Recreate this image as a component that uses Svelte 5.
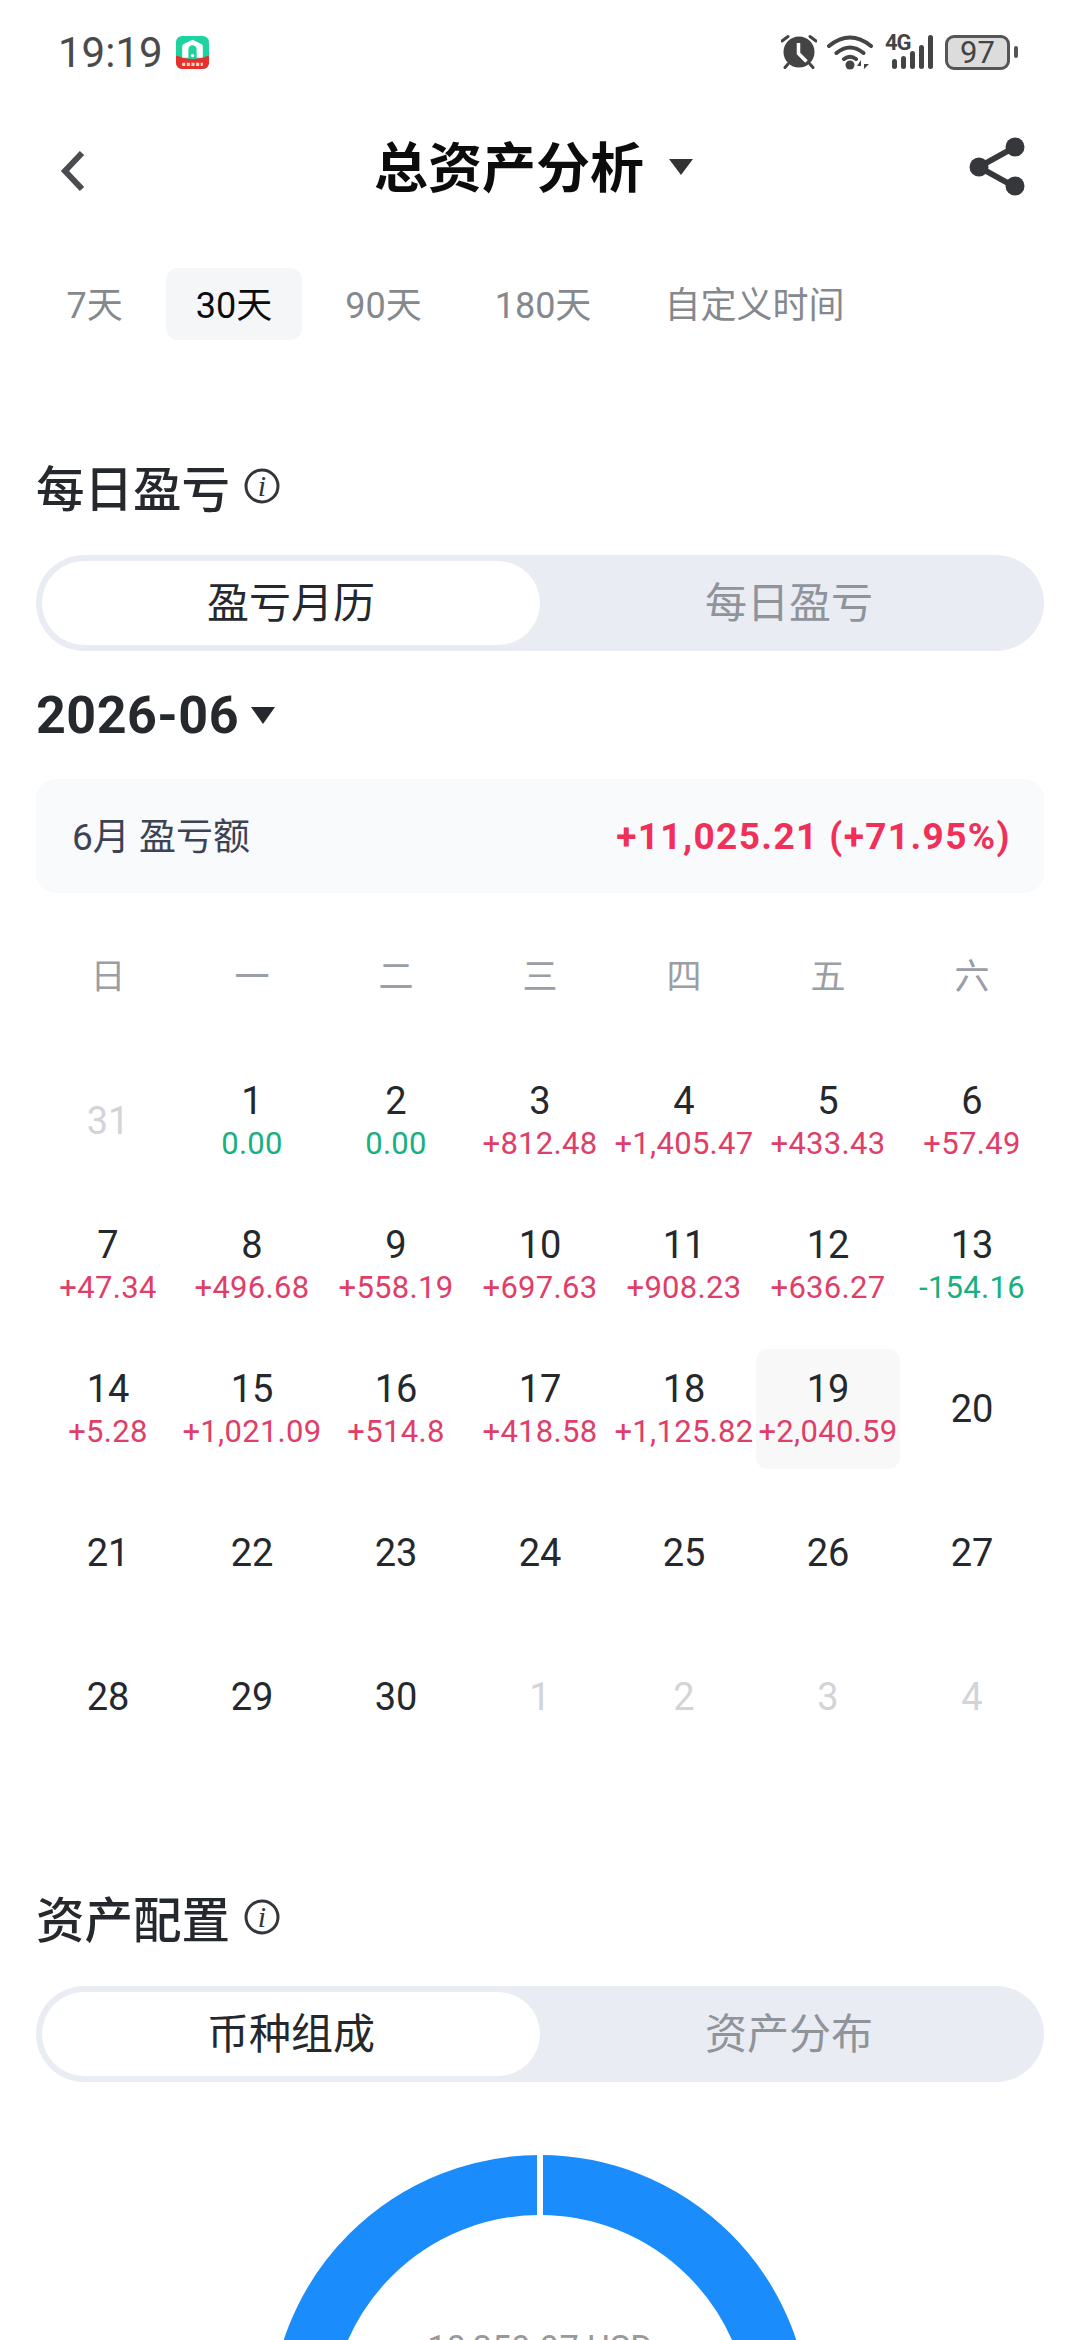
<script>
  const tabs = ['7天', '30天', '90天', '180天', '自定义时间'];
  const weekdays = ['日', '一', '二', '三', '四', '五', '六'];

  // muted = outside of this month, v = pnl of the day
  const days = [
    { d: 31, muted: true },
    { d: 1, v: '0.00', up: false },
    { d: 2, v: '0.00', up: false },
    { d: 3, v: '+812.48', up: true },
    { d: 4, v: '+1,405.47', up: true },
    { d: 5, v: '+433.43', up: true },
    { d: 6, v: '+57.49', up: true },
    { d: 7, v: '+47.34', up: true },
    { d: 8, v: '+496.68', up: true },
    { d: 9, v: '+558.19', up: true },
    { d: 10, v: '+697.63', up: true },
    { d: 11, v: '+908.23', up: true },
    { d: 12, v: '+636.27', up: true },
    { d: 13, v: '-154.16', up: false },
    { d: 14, v: '+5.28', up: true },
    { d: 15, v: '+1,021.09', up: true },
    { d: 16, v: '+514.8', up: true },
    { d: 17, v: '+418.58', up: true },
    { d: 18, v: '+1,125.82', up: true },
    { d: 19, v: '+2,040.59', up: true, today: true },
    { d: 20 }, { d: 21 }, { d: 22 }, { d: 23 }, { d: 24 }, { d: 25 }, { d: 26 }, { d: 27 }, { d: 28 }, { d: 29 }, { d: 30 },
    { d: 1, muted: true }, { d: 2, muted: true }, { d: 3, muted: true }, { d: 4, muted: true }
  ];
</script>

<div class="page">
  <div class="status">
    <span class="time">19:19</span>
    <svg class="appicon" width="33" height="33" viewBox="0 0 32 32">
      <rect width="32" height="32" rx="6" fill="#1fd3a0"/>
      <path d="M0 19q16 7 32 0v7a6 6 0 0 1-6 6H6a6 6 0 0 1-6-6z" fill="#e5302c"/>
      <path d="M6 21V10q0-1 1-2l8-4q1-.5 2 0l8 4q1 1 1 2v11h-6V13a4 4 0 0 0-8 0v8z" fill="#fff"/>
      <circle cx="16" cy="19" r="1.6" fill="#fff"/>
      <path d="M6 27.500h20" stroke="#ffd9c8" stroke-width="3" stroke-dasharray="3 1.500"/>
    </svg>
    <div class="status-right">
      <svg width="36" height="36" viewBox="0 0 36 36">
        <circle cx="18" cy="18" r="15.500" fill="#444"/>
        <path d="M17.500 9v10.500l8 8" stroke="#fff" stroke-width="3.500" fill="none"/>
        <path d="M1 7L7 2.500M29 2.500L35 7M7 30l-3 3.500M29 30l3 3.500" stroke="#444" stroke-width="3" stroke-linecap="round"/>
      </svg>
      <svg width="46" height="36" viewBox="0 0 46 36">
        <path d="M2 12Q23-5 44 12M9.500 19Q23 8 36.500 19M17 25Q23 20.500 29 25" stroke="#444" stroke-width="4" fill="none" stroke-linecap="round"/>
        <circle cx="23" cy="31" r="4.500" fill="#444"/>
        <path d="M34 35V26l-4 6h4zM37 26v9l5-5h-5z" fill="#444"/>
      </svg>
      <div class="net">
        <span class="g4">4G</span>
        <svg width="50" height="36" viewBox="0 0 50 36">
          <rect x="7" y="25" width="5" height="10" rx="2.500" fill="#444"/>
          <rect x="16" y="22" width="5" height="13" rx="2.500" fill="#444"/>
          <rect x="25" y="17" width="5" height="18" rx="2.500" fill="#444"/>
          <rect x="34" y="11" width="5" height="24" rx="2.500" fill="#444"/>
          <rect x="43" y="1" width="5" height="34" rx="2.500" fill="#444"/>
        </svg>
      </div>
      <div class="battery"><span>97</span></div>
      <div class="nub"></div>
    </div>
  </div>

  <header class="nav">
    <svg class="back" width="26" height="42" viewBox="0 0 26 42">
      <path d="M22 3L5 21l17 18" stroke="#4a4c52" stroke-width="6" fill="none"/>
    </svg>
    <div class="title"><span>总资产分析</span><i class="caret dark"></i></div>
    <svg class="share" width="56" height="60" viewBox="0 0 56 60">
      <path d="M46 10L10 30l36 20" stroke="#36373b" stroke-width="6" fill="none"/>
      <circle cx="46" cy="10" r="9.500" fill="#36373b"/>
      <circle cx="10" cy="30" r="9.500" fill="#36373b"/>
      <circle cx="46" cy="49" r="9.500" fill="#36373b"/>
    </svg>
  </header>

  <div class="tabs">
    {#each tabs as t, i}
      <span class="tab" class:active={i === 1}>{t}</span>
    {/each}
  </div>

  <section class="pnl">
    <h2>每日盈亏
      <svg class="info" width="36" height="36" viewBox="0 0 36 36">
        <circle cx="18" cy="18" r="16" stroke="#33353a" stroke-width="3" fill="none"/>
        <text x="18" y="28" text-anchor="middle" font-family="Liberation Serif" font-style="italic" font-size="30" fill="#33353a">i</text>
      </svg>
    </h2>
    <div class="segment">
      <span class="seg on">盈亏月历</span>
      <span class="seg">每日盈亏</span>
    </div>

    <div class="month"><span>2026-06</span><i class="caret"></i></div>

    <div class="summary">
      <span class="sum-label">6月 盈亏额</span>
      <span class="sum-value">+11,025.21 (+71.95%)</span>
    </div>

    <div class="weekdays">
      {#each weekdays as w}
        <span>{w}</span>
      {/each}
    </div>

    <div class="calendar">
      {#each days as c}
        <div class="cell" class:today={c.today}>
          <span class="num" class:muted={c.muted}>{c.d}</span>
          {#if c.v}
            <span class="val" class:up={c.up}>{c.v}</span>
          {/if}
        </div>
      {/each}
    </div>
  </section>

  <section class="alloc">
    <h2>资产配置
      <svg class="info" width="36" height="36" viewBox="0 0 36 36">
        <circle cx="18" cy="18" r="16" stroke="#33353a" stroke-width="3" fill="none"/>
        <text x="18" y="28" text-anchor="middle" font-family="Liberation Serif" font-style="italic" font-size="30" fill="#33353a">i</text>
      </svg>
    </h2>
    <div class="segment">
      <span class="seg on">币种组成</span>
      <span class="seg">资产分布</span>
    </div>
    <div class="donut">
      <svg width="540" height="540" viewBox="0 0 540 540">
        <circle cx="270" cy="270" r="240" stroke="#1b8cfb" stroke-width="60" fill="none"/>
        <rect x="267" y="0" width="6" height="62" fill="#fff"/>
      </svg>
      <span class="donut-total">10,359.97 USD</span>
    </div>
  </section>
</div>

<style>
  :global(body) {
    margin: 0;
    background: #fff;
  }

  .page {
    width: 1080px;
    height: 2340px;
    overflow: hidden;
    font-family: Roboto, "Noto Sans CJK SC", sans-serif;
    color: #25282d;
  }

  .status {
    height: 102px;
    padding: 2px 62px 0 58px;
    display: flex;
    align-items: center;
    box-sizing: border-box;
  }

  .time {
    font-size: 42px;
    color: #4a4a4a;
  }

  .appicon {
    margin-left: 13px;
  }

  .status-right {
    margin-left: auto;
    display: flex;
    align-items: center;
    gap: 10px;
  }

  .net {
    position: relative;
    margin-left: 2px;
  }

  .net svg {
    display: block;
  }

  .g4 {
    position: absolute;
    left: 0;
    top: -2px;
    font-size: 22px;
    line-height: 22px;
    font-weight: 700;
    letter-spacing: -1px;
    color: #444;
  }

  .battery {
    width: 65px;
    height: 35px;
    border: 3px solid #555;
    border-radius: 9px;
    background: #dcdcdc;
    box-sizing: border-box;
    display: flex;
    align-items: center;
    justify-content: center;
    font-size: 31px;
    color: #444;
  }

  .nub {
    width: 4px;
    height: 12px;
    background: #555;
    border-radius: 2px;
    margin-left: -6px;
  }

  .nav {
    height: 130px;
    padding: 0 55px 0 60px;
    display: flex;
    align-items: center;
    justify-content: space-between;
    box-sizing: border-box;
  }

  .back {
    margin-top: 8px;
  }

  .title {
    font-size: 54px;
    font-weight: 700;
    color: #0c0c0c;
    display: flex;
    align-items: center;
    gap: 25px;
    margin-left: 12px;
    padding-bottom: 6px;
  }

  .caret {
    display: inline-block;
    width: 0;
    height: 0;
    border-left: 12px solid transparent;
    border-right: 12px solid transparent;
    border-top: 17px solid #25282d;
  }

  .caret.dark {
    border-left-width: 12px;
    border-right-width: 12px;
    border-top: 16px solid #333;
    margin-top: 6px;
  }

  .tabs {
    margin-top: 36px;
    padding-left: 37px;
    display: flex;
    align-items: center;
    font-size: 36px;
    color: #85888d;
  }

  .tab {
    padding: 0 29.500px;
    height: 72px;
    line-height: 76px;
    border-radius: 12px;
    margin-right: 14px;
  }

  .tab.active {
    background: #f5f6f8;
    color: #0c0c0c;
  }

  section {
    padding: 0 36px;
  }

  .pnl {
    margin-top: 116px;
  }

  .alloc {
    margin-top: 118px;
  }

  h2 {
    margin: 0;
    height: 60px;
    display: flex;
    align-items: center;
    gap: 14px;
    font-size: 48.500px;
    font-weight: 500;
    color: #25282d;
  }

  .info {
    flex: none;
  }

  .segment {
    margin-top: 39px;
    height: 96px;
    background: #e9ecf2;
    border-radius: 48px;
    padding: 6px;
    display: grid;
    grid-template-columns: 1fr 1fr;
    box-sizing: border-box;
    font-size: 42px;
    color: #8f939a;
  }

  .seg {
    display: flex;
    align-items: center;
    justify-content: center;
    border-radius: 42px;
    padding-bottom: 8px;
    box-sizing: border-box;
  }

  .seg.on {
    background: #fff;
    color: #25282d;
  }

  .month {
    margin-top: 34px;
    display: flex;
    align-items: center;
    gap: 12px;
    height: 60px;
    font-size: 52px;
    font-weight: 700;
    letter-spacing: 0.500px;
    color: #25282d;
  }

  .summary {
    margin-top: 34px;
    height: 114px;
    background: #f8fafb;
    border-radius: 20px;
    padding: 0 33px 0 36px;
    display: flex;
    align-items: center;
    justify-content: space-between;
    font-size: 37px;
  }

  .sum-label {
    color: #3c4354;
    margin-top: -4px;
  }

  .sum-value {
    color: #f03058;
    font-size: 37px;
    font-weight: 700;
    letter-spacing: 1.400px;
  }

  .weekdays {
    margin-top: 45px;
    display: grid;
    grid-template-columns: repeat(7, 1fr);
    height: 70px;
    align-items: center;
    text-align: center;
    font-size: 35px;
    color: #9a9ea5;
  }

  .calendar {
    margin-top: 41px;
    display: grid;
    grid-template-columns: repeat(7, 144px);
    grid-auto-rows: 144px;
  }

  .cell {
    height: 120px;
    margin-top: 12px;
    display: flex;
    flex-direction: column;
    align-items: center;
    justify-content: center;
    border-radius: 12px;
    white-space: nowrap;
  }

  .cell.today {
    background: #f8f8f9;
  }

  .num {
    font-size: 38px;
    line-height: 46px;
  }

  .num.muted {
    color: #d2d4d8;
  }

  .val {
    font-size: 31px;
    letter-spacing: 0.300px;
    line-height: 40px;
    color: #17b07e;
  }

  .val.up {
    color: #e03e68;
  }

  .donut {
    margin-top: 73px;
    display: flex;
    justify-content: center;
    position: relative;
  }

  .donut-total {
    position: absolute;
    left: 0;
    right: 0;
    top: 173px;
    text-align: center;
    font-size: 34.500px;
    color: #999;
  }
</style>
